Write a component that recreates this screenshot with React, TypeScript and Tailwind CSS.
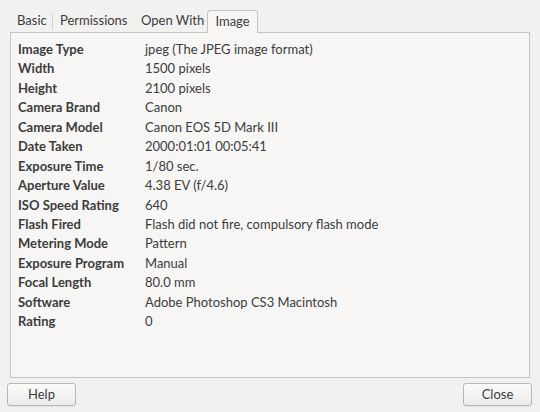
import React from 'react';

const rows: [string, string][] = [
  ['Image Type', 'jpeg (The JPEG image format)'],
  ['Width', '1500 pixels'],
  ['Height', '2100 pixels'],
  ['Camera Brand', 'Canon'],
  ['Camera Model', 'Canon EOS 5D Mark III'],
  ['Date Taken', '2000:01:01 00:05:41'],
  ['Exposure Time', '1/80 sec.'],
  ['Aperture Value', '4.38 EV (f/4.6)'],
  ['ISO Speed Rating', '640'],
  ['Flash Fired', 'Flash did not fire, compulsory flash mode'],
  ['Metering Mode', 'Pattern'],
  ['Exposure Program', 'Manual'],
  ['Focal Length', '80.0 mm'],
  ['Software', 'Adobe Photoshop CS3 Macintosh'],
  ['Rating', '0'],
];

const Button: React.FC<{ label: string }> = ({ label }) => (
  <button className="w-[69px] h-[23px] rounded-[3px] border border-[#b9b7b4] bg-gradient-to-b from-[#fbfbfa] to-[#ecebe9] shadow-[0_1px_0_rgba(0,0,0,0.06)] text-[13px] text-[#3c3c3c]">
    {label}
  </button>
);

export default function App() {
  return (
    <div className="w-[540px] h-[412px] bg-[#f2f1f0] flex flex-col text-[#3c3c3c] text-[13px] font-['Lato','DejaVu_Sans',sans-serif] overflow-hidden">
      {/* Tabs */}
      <div className="flex items-end h-[32px] pl-[10px] pt-[10px]">
        <div className="w-[42px] pl-[7px] h-[22px] flex items-center whitespace-nowrap">Basic</div>
        <div className="w-px h-[17px] bg-[#d4d2cf] self-center mt-[1px]" />
        <div className="w-[81px] pl-[7px] h-[22px] flex items-center whitespace-nowrap">Permissions</div>
        <div className="w-[73px] pl-[7px] h-[22px] flex items-center whitespace-nowrap">Open With</div>
        <div className="relative z-10 -mb-px w-[51px] h-[23px] flex items-center justify-center bg-[#f7f6f5] border border-b-0 border-[#c6c4c1] rounded-t-[4px]">
          Image
        </div>
      </div>

      {/* Panel */}
      <div className="ml-[10px] w-[520px] h-[346px] bg-[#f7f6f5] border border-[#c6c4c1] pt-[7px] pl-[7px]">
        <div className="grid grid-cols-[127px_1fr]">
          {rows.map(([k, v]) => (
            <React.Fragment key={k}>
              <div className="h-[19.45px] leading-[19.45px] font-bold">{k}</div>
              <div className="h-[19.45px] leading-[19.45px]">{v}</div>
            </React.Fragment>
          ))}
        </div>
      </div>

      {/* Buttons */}
      <div className="flex justify-between pl-[7px] pr-[8px] pt-[5px]">
        <Button label="Help" />
        <Button label="Close" />
      </div>
    </div>
  );
}
